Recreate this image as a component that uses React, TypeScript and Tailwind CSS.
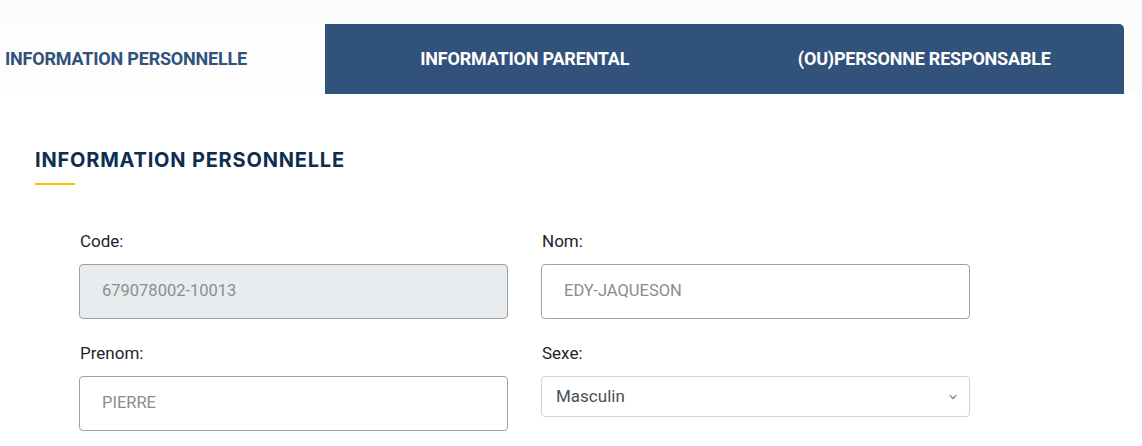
import { ChevronDown } from 'lucide-react'

const tabs = [
  { label: 'INFORMATION PARENTAL' },
  { label: '(OU)PERSONNE RESPONSABLE' },
]

function Field({ label, value, disabled }: { label: string; value: string; disabled?: boolean }) {
  return (
    <div className="flex flex-col">
      <label className="text-[17px] leading-[20px] text-[#212529] mb-[13px] pl-px">{label}</label>
      <div
        className={`h-[55px] rounded-[4px] border border-[#a0a0a0] flex items-center px-[22px] text-[16.5px] text-[#8c8c8c] ${
          disabled ? 'bg-[#e9ecef]' : 'bg-white'
        }`}
      >
        {value}
      </div>
    </div>
  )
}

export default function App() {
  return (
    <div className="w-[1142px] h-[446px] overflow-hidden bg-white font-['Roboto',sans-serif]">
      {/* Tabs */}
      <div className="bg-[#fcfcfc] pt-[24px] flex">
        <div className="w-[325px] h-[70px] bg-[#fdfdfd] flex items-center pl-[5px] pb-[2px] text-[18px] font-bold text-[#31527a] tracking-[-0.2px]">
          INFORMATION PERSONNELLE
        </div>
        <div className="w-[799px] h-[70px] bg-[#31527a] rounded-tr-[5px] flex">
          {tabs.map((t) => (
            <div
              key={t.label}
              className="flex-1 flex items-center justify-center pb-[2px] text-[18px] font-bold text-white tracking-[-0.2px]"
            >
              {t.label}
            </div>
          ))}
        </div>
      </div>

      {/* Section */}
      <div className="pl-[35px] pt-[54px]">
        <h2 className="font-['Inter',sans-serif] font-bold text-[20px] leading-[24px] tracking-[0.8px] text-[#0f2d52]">
          INFORMATION PERSONNELLE
        </h2>
        <div className="w-[40px] h-[2px] bg-[#fcc400] mt-[11px]" />
      </div>

      <div className="pl-[79px] pt-[46px] grid grid-cols-[429px_429px] gap-x-[33px] gap-y-[24px]">
        <Field label="Code:" value="679078002-10013" disabled />
        <Field label="Nom:" value="EDY-JAQUESON" />
        <Field label="Prenom:" value="PIERRE" />
        <div className="flex flex-col">
          <label className="text-[17px] leading-[20px] text-[#212529] mb-[13px] pl-px">Sexe:</label>
          <div className="h-[41px] rounded-[4px] border border-[#ced4da] bg-white flex items-center justify-between pl-[14px] pr-[10px] text-[17px] text-[#495057]">
            <span>Masculin</span>
            <ChevronDown className="w-[12px] h-[12px] text-[#8a8a8a]" strokeWidth={2.5} />
          </div>
        </div>
      </div>
    </div>
  )
}
